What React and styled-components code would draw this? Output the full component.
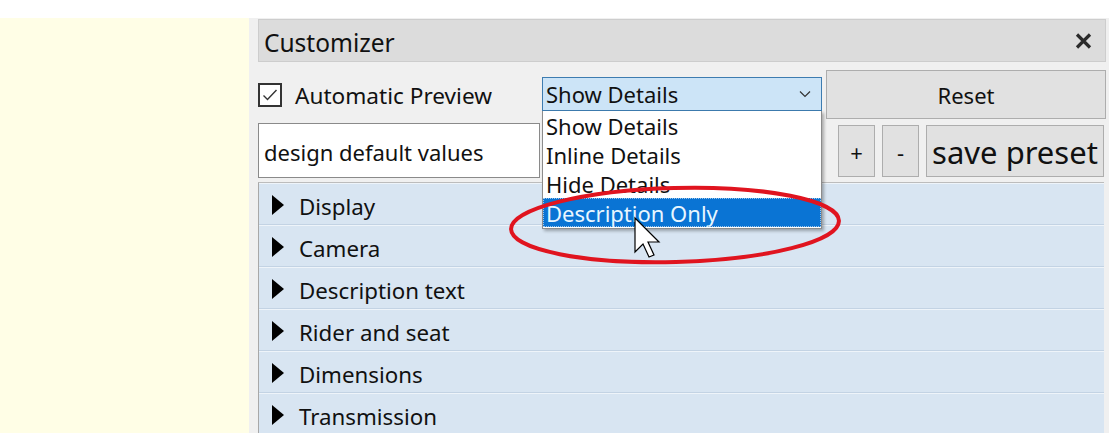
import React from "react";
import styled, { createGlobalStyle } from "styled-components";

const Global = createGlobalStyle`
  html, body { margin: 0; padding: 0; background: #ffffff; }
  body { font-family: "Noto Sans", "Open Sans", "DejaVu Sans", sans-serif; color: #000; }
`;

const Page = styled.div`
  position: relative;
  width: 1109px;
  height: 433px;
  overflow: hidden;
  padding-top: 18px;
  box-sizing: border-box;
  display: flex;
  flex-direction: column;
`;

const Main = styled.div`
  flex: 1;
  display: flex;
  min-height: 0;
`;

const Viewer = styled.div`
  width: 249px;
  background: #fffee6;
`;

const Side = styled.div`
  flex: 1;
  background: #f0f0f0;
  padding: 1px 5px 0 9px;
  display: flex;
  flex-direction: column;
  min-width: 0;
  min-height: 0;
  overflow: hidden;
`;

const TitleBar = styled.div`
  flex-shrink: 0;
  height: 43px;
  box-sizing: border-box;
  background: #dcdcdc;
  border: 1px solid #cdcdcd;
  display: flex;
  align-items: center;
  justify-content: space-between;
  padding: 3px 13px 0 5px;
  margin-right: -2px;
`;

const Title = styled.span`
  font-size: 24.5px;
  color: #111;
`;

const CloseIcon = styled.svg`
  width: 17px;
  height: 16px;
  display: block;
  margin-top: -3px;
`;

const ControlRow = styled.div`
  flex-shrink: 0;
  display: flex;
  align-items: center;
  margin-top: 7px;
  height: 50px;
  margin-right: -2px;
`;

const CheckLabel = styled.label`
  width: 284px;
  display: flex;
  align-items: center;
  gap: 13px;
  font-size: 22.6px;
  color: #111;
`;

const LabelText = styled.span`
  padding-top: 2px;
`;

const CheckBox = styled.span`
  width: 24px;
  height: 24px;
  box-sizing: border-box;
  border: 2px solid #333;
  background: #fff;
  display: flex;
  align-items: center;
  justify-content: center;
  margin-top: 2px;
`;

const ComboWrap = styled.div`
  position: relative;
  width: 280px;
  height: 34px;
`;

const Combo = styled.div`
  height: 100%;
  box-sizing: border-box;
  background: #cce4f7;
  border: 1px solid #3d7cb0;
  display: flex;
  align-items: center;
  justify-content: space-between;
  padding: 0 10px 0 3px;
  font-size: 22px;
  color: #111;
`;

const Popup = styled.div`
  position: absolute;
  top: 100%;
  left: 0;
  width: 280px;
  box-sizing: border-box;
  background: #fff;
  border: 1px solid #8c8c8c;
  border-top: none;
  box-shadow: 2px 2px 3px rgba(0,0,0,0.3);
  z-index: 5;
  padding-bottom: 1px;
`;

const Option = styled.div`
  height: 29px;
  box-sizing: border-box;
  padding: 0 0 0 3px;
  display: flex;
  align-items: center;
  font-size: 22px;
  line-height: 1;
  color: ${(p) => (p.$active ? "#e8f6ff" : "#111")};
  background: ${(p) => (p.$active ? "#0a74d4" : "transparent")};
  outline: ${(p) => (p.$active ? "1px dotted #9cc6ea" : "none")};
  outline-offset: -1px;
`;

const Button = styled.button`
  box-sizing: border-box;
  border: 1px solid #adadad;
  background: #e1e1e1;
  font-family: inherit;
  color: #111;
  font-size: ${(p) => p.$size || 22}px;
  padding: 2px 0 0;
  display: flex;
  align-items: center;
  justify-content: center;
  line-height: 1;
`;

const ResetButton = styled(Button)`
  flex: 1;
  height: 49px;
  margin-left: 4px;
`;

const PresetRow = styled.div`
  flex-shrink: 0;
  display: flex;
  align-items: center;
  margin-top: 4px;
  height: 55px;
  gap: 7px;
`;

const PresetInput = styled.div`
  width: 282px;
  height: 55px;
  box-sizing: border-box;
  background: #fff;
  border: 1px solid #8a8a8a;
  display: flex;
  align-items: center;
  padding: 2px 0 0 5px;
  font-size: 22px;
  color: #111;
  margin-right: auto;
`;

const SmallButton = styled(Button)`
  width: 37px;
  height: 52px;
`;

const SaveButton = styled(Button)`
  width: 178px;
  height: 52px;
  padding: 3px 0 0;
`;

const Groups = styled.div`
  margin-top: 4px;
  flex: 1;
  min-height: 0;
  overflow: hidden;
  border-left: 1px solid #a8a8a8;
  border-top: 1px solid #bcbcbc;
  background: #d8e5f2;
`;

const Group = styled.div`
  height: 42px;
  box-sizing: border-box;
  display: flex;
  align-items: center;
  padding: 5px 0 0 13px;
  gap: 15px;
  font-size: 22.3px;
  color: #111;
  border-bottom: 1px solid #c3d3e4;
  box-shadow: inset 0 1px 0 #eef4fa;
`;

const Triangle = styled.span`
  width: 0;
  height: 0;
  margin-top: -3px;
  border-top: 10px solid transparent;
  border-bottom: 10px solid transparent;
  border-left: 12px solid #000;
`;

const Overlay = styled.svg`
  position: absolute;
  left: 0;
  top: 0;
  width: 1109px;
  height: 433px;
  pointer-events: none;
  z-index: 10;
`;

const groups = ["Display", "Camera", "Description text", "Rider and seat", "Dimensions", "Transmission"];
const options = ["Show Details", "Inline Details", "Hide Details", "Description Only"];

export default function App() {
  return (
    <>
      <Global />
      <Page>
        <Main>
          <Viewer />
          <Side>
            <TitleBar>
              <Title>Customizer</Title>
              <CloseIcon viewBox="0 0 17 16">
                <path d="M2 1.5 L15 14.5 M15 1.5 L2 14.5" stroke="#2b2b2b" strokeWidth="3.2" strokeLinecap="butt" />
              </CloseIcon>
            </TitleBar>
            <ControlRow>
              <CheckLabel>
                <CheckBox>
                  <svg width="16" height="14" viewBox="0 0 16 14">
                    <path d="M1.5 7.5 L5.5 11.5 L14.5 2" fill="none" stroke="#333" strokeWidth="1.4" />
                  </svg>
                </CheckBox>
                <LabelText>Automatic Preview</LabelText>
              </CheckLabel>
              <ComboWrap>
                <Combo>
                  <span>Show Details</span>
                  <svg width="12" height="8" viewBox="0 0 12 8">
                    <path d="M1 1.5 L6 6.5 L11 1.5" fill="none" stroke="#333" strokeWidth="1.2" />
                  </svg>
                </Combo>
                <Popup>
                  {options.map((o, i) => (
                    <Option key={o} $active={i === 3}>{o}</Option>
                  ))}
                </Popup>
              </ComboWrap>
              <ResetButton>Reset</ResetButton>
            </ControlRow>
            <PresetRow>
              <PresetInput>design default values</PresetInput>
              <SmallButton>+</SmallButton>
              <SmallButton>-</SmallButton>
              <SaveButton $size={31}>save preset</SaveButton>
            </PresetRow>
            <Groups>
              {groups.map((g) => (
                <Group key={g}>
                  <Triangle />
                  {g}
                </Group>
              ))}
            </Groups>
          </Side>
        </Main>
        <Overlay viewBox="0 0 1109 433">
          <ellipse cx="675" cy="225" rx="164" ry="37" transform="rotate(-1.5 675 225)" fill="none" stroke="#e0141f" strokeWidth="4" />
          <path
            d="M635 218 L635 252 L643 244 L649 257 L654 255 L648 242 L659 242 Z"
            fill="#fff"
            stroke="#000"
            strokeWidth="1.2"
            strokeLinejoin="miter"
          />
        </Overlay>
      </Page>
    </>
  );
}
